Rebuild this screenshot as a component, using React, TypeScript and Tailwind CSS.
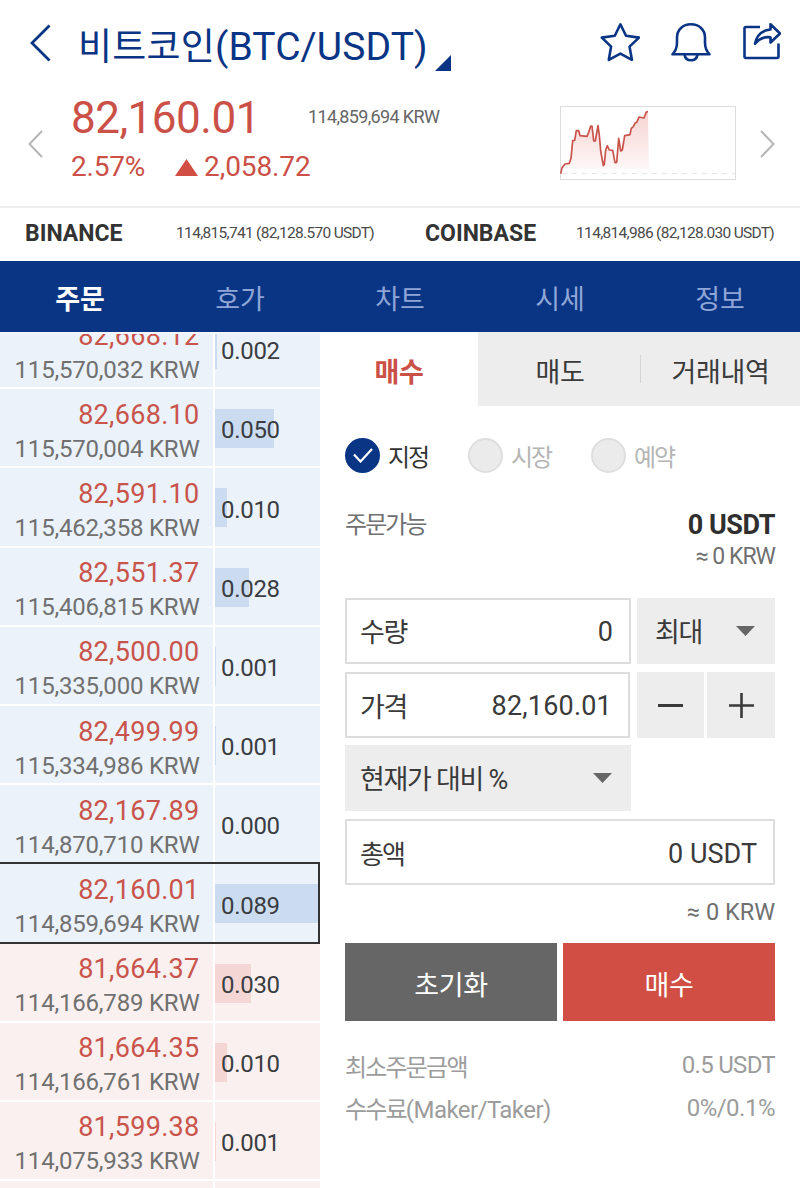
import { useState } from 'react';
import clsx from 'clsx';

type Side = 'ask' | 'bid';

interface Level {
  price: string;
  krw: string;
  qty: string;
  bar: number; // px width of the depth bar
  side: Side;
}

const LEVELS: Level[] = [
  { price: '82,668.12', krw: '115,570,032', qty: '0.002', bar: 2, side: 'ask' },
  { price: '82,668.10', krw: '115,570,004', qty: '0.050', bar: 59, side: 'ask' },
  { price: '82,591.10', krw: '115,462,358', qty: '0.010', bar: 12, side: 'ask' },
  { price: '82,551.37', krw: '115,406,815', qty: '0.028', bar: 34, side: 'ask' },
  { price: '82,500.00', krw: '115,335,000', qty: '0.001', bar: 1, side: 'ask' },
  { price: '82,499.99', krw: '115,334,986', qty: '0.001', bar: 1, side: 'ask' },
  { price: '82,167.89', krw: '114,870,710', qty: '0.000', bar: 0, side: 'ask' },
  { price: '82,160.01', krw: '114,859,694', qty: '0.089', bar: 105, side: 'ask' },
  { price: '81,664.37', krw: '114,166,789', qty: '0.030', bar: 36, side: 'bid' },
  { price: '81,664.35', krw: '114,166,761', qty: '0.010', bar: 12, side: 'bid' },
  { price: '81,599.38', krw: '114,075,933', qty: '0.001', bar: 1, side: 'bid' },
];

const CURRENT_PRICE = '82,160.01';
const TABS = ['주문', '호가', '차트', '시세', '정보'];
const ORDER_TYPES = ['지정', '시장', '예약'];

const SPARK =
  'M.7 67.7 2 61.7 5 58l4.3-.7 1.7-5 1.7-17.600 2-.4 1.600-9.600h2.400l1.300 5 7 .6 1.700-4 2-6.300H32L33.700 35h1.600L38 19.700l1.300 9.300 1.400 16 2.600 14.700 1-1.400L45.700 44l1.600-4.300 2 4.300 3.400.3L55 56.700l1.700-.4 2-24 2 12.700 1.600-1 2.400-14.300 5.300-1 1.300-6.400 2-1.600 1.700-3.400 1.700-1L79 11l5 1 2.300-6 1.700-.3';

function Header() {
  return (
    <header className="flex h-[90px] items-start text-[#0a3585]">
      <svg className="ml-[30px] mt-[24px] h-[38px] w-[21px] shrink-0" viewBox="0 0 21 38" fill="none" stroke="currentColor" strokeWidth="2.8">
        <path d="M19.5 1.5 2 19l17.5 17.5" />
      </svg>
      <h1 className="ml-[27px] mt-[19px] flex h-[56px] items-baseline whitespace-nowrap text-[39px] leading-[56px]">
        <span className="text-[37px] tracking-[0.2px]">비트코인</span>
        <span className="tracking-[0.1px]">(BTC/USDT)</span>
      </h1>
      <svg className="ml-[7px] mt-[55px] h-[16px] w-[16px] shrink-0" viewBox="0 0 16 16" fill="currentColor">
        <path d="M16 0v16H0z" />
      </svg>
      <div className="ml-auto mr-[19px] mt-[22px] flex gap-[31px]">
        <svg className="h-[40px] w-[40px]" viewBox="0 0 40 40" fill="none" stroke="currentColor" strokeWidth="2.6" strokeLinejoin="round">
          <path d="m20.4 2.3 5.6 11.5 13 1.8-9.5 9 2.4 13.2-11.500-6.200-11.600 6.200 2.300-13.200-9.300-9 13-1.800z" />
        </svg>
        <svg className="h-[40px] w-[40px]" viewBox="0 0 40 40" fill="none" stroke="currentColor" strokeWidth="2.6" strokeLinejoin="round">
          <path d="M1.5 32.300h37c-3.200-3.300-4.500-6.800-4.500-11.500v-5.300C34 7.600 28 2.300 20 2.300S6 7.600 6 15.500v5.300c0 4.700-1.300 8.200-4.500 11.500z" />
          <path d="M13.5 32.500c.5 3.500 3 5.800 6.500 5.800s6-2.300 6.500-5.800" />
        </svg>
        <svg className="h-[40px] w-[39px]" viewBox="0 0 39 40" fill="none" stroke="currentColor" strokeWidth="2.6" strokeLinejoin="round">
          <path d="M18 5H4Q2.500 5 2.500 6.500V34.500q0 1.500 1.500 1.500h31q1.500 0 1.500-1.500V21.500" />
          <path d="M28.500 2.300 38 11.500l-9.500 9v-5.300c-6.500-.6-11.500 1.300-15.500 6.600 1.600-8 7-13.500 15.500-14.300z" />
        </svg>
      </div>
    </header>
  );
}

function Sparkline() {
  return (
    <svg className="h-[74px] w-[176px]" viewBox="0 0 176 74" fill="none">
      <defs>
        <linearGradient id="spark" x1="0" y1="0" x2="0" y2="1">
          <stop offset="0" stopColor="#f6d3d0" />
          <stop offset="1" stopColor="#fefafa" />
        </linearGradient>
      </defs>
      <path d={`${SPARK}L89 63H.7z`} fill="url(#spark)" />
      <path d="M2 67.5h173" stroke="#e8e6e2" strokeDasharray="5 5" />
      <rect x="0.5" y="0.5" width="175" height="73" stroke="#ddd" />
      <path d={SPARK} stroke="#c9544b" strokeWidth="1.7" strokeLinejoin="round" />
    </svg>
  );
}

function PriceSummary() {
  return (
    <section className="flex h-[116px] items-start text-[#cb5047]">
      <svg className="ml-[28px] mt-[40px] h-[28px] w-[15px] shrink-0" viewBox="0 0 15 28" fill="none" stroke="#b5b5b5" strokeWidth="2">
        <path d="M14 1 1.5 14 14 27" />
      </svg>
      <div className="ml-[28px] mt-[2px] w-[237px] shrink-0">
        <div className="text-[44px] leading-[52px] tracking-[-0.5px]">82,160.01</div>
        <div className="mt-[6px] flex items-center whitespace-nowrap text-[28px] leading-[34px]">
          <span className="tracking-[-0.2px]">2.57%</span>
          <svg className="ml-[30px] h-[17px] w-[23px] shrink-0" viewBox="0 0 23 17" fill="#d04e44">
            <path d="M11.5 0 23 17H0z" />
          </svg>
          <span className="ml-[6px] tracking-[-0.1px]">2,058.72</span>
        </div>
      </div>
      <div className="mt-[15px] whitespace-nowrap text-[18px] leading-[24px] tracking-[-0.65px] text-[#666]">114,859,694 KRW</div>
      <div className="ml-auto mt-[16px]">
        <Sparkline />
      </div>
      <svg className="ml-[24px] mr-[25px] mt-[40px] h-[28px] w-[15px] shrink-0" viewBox="0 0 15 28" fill="none" stroke="#b5b5b5" strokeWidth="2">
        <path d="M1 1l12.5 13L1 27" />
      </svg>
    </section>
  );
}

function Exchange({ name, quote }: { name: string; quote: string }) {
  return (
    <div className="flex w-[400px] items-center justify-between pb-[1px] pl-[25px] pr-[26px]">
      <span className="text-[23px] font-bold text-[#333]">{name}</span>
      <span className="whitespace-nowrap text-[15.5px] tracking-[-0.7px] text-[#4a4a4a]">{quote}</span>
    </div>
  );
}

function LevelRow({ level }: { level: Level }) {
  const selected = level.price === CURRENT_PRICE;
  const bg = level.side === 'ask' ? 'bg-[#ebf2fa]' : 'bg-[#faf0ef]';
  return (
    <div className="relative flex h-[79.2px] shrink-0 gap-[2.5px] pb-[2px]">
      <div className={clsx('w-[212.5px] pr-[13px] pt-[8.5px] text-right leading-[34px]', bg)}>
        <div className="text-[27px] tracking-[0.3px] text-[#c9544c]">{level.price}</div>
        <div className="whitespace-nowrap text-[24px] tracking-[-0.2px] text-[#707070]">{level.krw} KRW</div>
      </div>
      <div className={clsx('relative flex flex-1 items-center pl-[6px] pt-[5px]', bg)}>
        <div
          className={clsx('absolute left-0 top-[20px] h-[39px]', level.side === 'ask' ? 'bg-[#cbdcf0]' : 'bg-[#f4d7d5]')}
          style={{ width: level.bar }}
        />
        <span className="relative text-[24px] tracking-[-0.3px] text-[#3a3d42]">{level.qty}</span>
      </div>
      {selected && <div className="absolute -top-[2px] bottom-0 left-0 right-0 border-2 border-l-0 border-[#333]" />}
    </div>
  );
}

function Caret() {
  return (
    <svg className="h-[10px] w-[19px] shrink-0" viewBox="0 0 19 10" fill="#666">
      <path d="M0 0h19l-9.5 10z" />
    </svg>
  );
}

function OrderForm() {
  const [type, setType] = useState('지정');
  return (
    <section className="flex w-[480px] flex-col text-[#3a3a3a]">
      <div className="flex h-[74px] shrink-0 text-[27px] tracking-[-0.3px]">
        <div className="flex w-[158px] items-center justify-center pt-[8px] font-bold text-[#cb5047]">매수</div>
        <div className="flex flex-1 items-center bg-[#ededed]">
          <div className="w-[162px] pl-[2px] pt-[8px] text-center">매도</div>
          <div className="h-[28px] w-px bg-[#d5d5d5]" />
          <div className="flex-1 pt-[8px] text-center">거래내역</div>
        </div>
      </div>

      <div className="flex flex-col pl-[25px] pr-[25px]">
        <div className="mt-[31px] flex h-[36px]">
          {ORDER_TYPES.map((t) => (
            <button key={t} onClick={() => setType(t)} className="flex w-[123px] items-center">
              {t === type ? (
                <span className="flex size-[35px] items-center justify-center rounded-full bg-[#0a3585]">
                  <svg className="h-[15px] w-[20px]" viewBox="0 0 20 15" fill="none" stroke="#fff" strokeWidth="2.2">
                    <path d="M1 6.5 7.5 13.5 19 1" />
                  </svg>
                </span>
              ) : (
                <span className="size-[35px] rounded-full border-2 border-[#dedede] bg-[#ebebeb]" />
              )}
              <span className={clsx('ml-[8px] mt-[6px] text-[24px] leading-[32px] tracking-[-2.2px]', t === type ? 'text-[#333]' : 'text-[#b5b5b5]')}>{t}</span>
            </button>
          ))}
        </div>

        <div className="mt-[36px] flex h-[89px] justify-between">
          <span className="text-[24px] leading-[32px] tracking-[-1.9px] text-[#707070]">주문가능</span>
          <div className="text-right">
            <div className="text-[27px] font-bold leading-[33px] tracking-[-0.45px] text-[#2f2f2f]">0 USDT</div>
            <div className="text-[23px] leading-[30px] tracking-[-1px] text-[#707070]">≈ 0 KRW</div>
          </div>
        </div>

        <div className="flex h-[66px] text-[27px]">
          <div className="flex w-[286px] items-center justify-between border-2 border-[#ddd] pl-[13px] pr-[16px]">
            <span className="pt-[5px] tracking-[-1.3px]">수량</span>
            <span className="pt-[3px]">0</span>
          </div>
          <button className="ml-[6px] flex flex-1 items-center justify-between bg-[#ededed] pl-[18px] pr-[20px]">
            <span className="pt-[5px] tracking-[-1.3px]">최대</span>
            <Caret />
          </button>
        </div>

        <div className="mt-[8px] flex h-[66px] text-[27px]">
          <div className="flex w-[285px] items-center justify-between border-2 border-[#ddd] pl-[13px] pr-[16px]">
            <span className="pt-[6px] tracking-[-1.3px]">가격</span>
            <span className="pt-[3px] tracking-[0.2px]">82,160.01</span>
          </div>
          <button className="ml-[7px] flex w-[67px] items-center justify-center bg-[#ededed]" aria-label="minus">
            <span className="h-[3px] w-[25px] bg-[#3a3a3a]" />
          </button>
          <button className="ml-[3px] flex flex-1 items-center justify-center bg-[#ededed]" aria-label="plus">
            <svg className="size-[25px]" viewBox="0 0 25 25" stroke="#3a3a3a" strokeWidth="2.6">
              <path d="M0 12.5h25M12.5 0v25" />
            </svg>
          </button>
        </div>

        <button className="mt-[7px] flex h-[66px] w-[286px] items-center justify-between bg-[#ededed] pl-[15px] pr-[19px] text-[27px]">
          <span className="mt-[5px] tracking-[-1.3px]">현재가 대비 %</span>
          <Caret />
        </button>

        <div className="mt-[8px] flex h-[66px] items-center justify-between border-2 border-[#ddd] pl-[13px] pr-[16px] text-[27px]">
          <span className="pt-[6px] text-[26px] tracking-[-2px]">총액</span>
          <span className="pt-[4px]">0 USDT</span>
        </div>

        <div className="mt-[11px] h-[32px] text-right text-[23.5px] leading-[32px] text-[#707070]">≈ 0 KRW</div>

        <div className="mt-[15px] flex h-[78px] gap-[6px] text-[27px] text-white">
          <button className="flex-1 bg-[#666] pt-[8px] tracking-[-0.3px]">초기화</button>
          <button className="flex-1 bg-[#d04e44] pt-[8px] tracking-[-0.3px]">매수</button>
        </div>

        <div className="mt-[23px] flex h-[43px] justify-between text-[24px] leading-[40px] text-[#9c9c9c]">
          <span className="mt-[4px] tracking-[-1.8px]">최소주문금액</span>
          <span className="mt-[1px] tracking-[-0.7px]">0.5 USDT</span>
        </div>
        <div className="flex h-[43px] justify-between text-[24px] leading-[40px] text-[#9c9c9c]">
          <span className="mt-[3px]">
            <span className="tracking-[-1.8px]">수수료</span>
            <span className="tracking-[-0.55px]">(Maker/Taker)</span>
          </span>
          <span className="mt-px tracking-[-0.5px]">0%/0.1%</span>
        </div>
      </div>
    </section>
  );
}

export default function App() {
  const [tab, setTab] = useState('주문');
  return (
    <div className="flex h-[1188px] w-[800px] flex-col overflow-hidden bg-white font-['Roboto','Noto_Sans_CJK_KR',sans-serif]">
      <Header />
      <PriceSummary />
      <div className="flex h-[55px] border-t-2 border-[#eee]">
        <Exchange name="BINANCE" quote="114,815,741 (82,128.570 USDT)" />
        <Exchange name="COINBASE" quote="114,814,986 (82,128.030 USDT)" />
      </div>
      <nav className="flex h-[71px] bg-[#0a3585] pt-[8px] text-[27px]">
        {TABS.map((t) => (
          <button
            key={t}
            onClick={() => setTab(t)}
            className={clsx('w-[160px]', t === tab ? 'font-bold text-white' : 'text-[#8fa6d6]')}
          >
            {t}
          </button>
        ))}
      </nav>
      <main className="flex min-h-0 flex-1">
        <div className="w-[320px] overflow-hidden border-t-2 border-[#f3f6fa]">
          <div className="-mt-[23.9px] flex flex-col">
            {LEVELS.map((level) => (
              <LevelRow key={level.price} level={level} />
            ))}
            {/* next level, peeking in at the bottom */}
            <div className="flex h-[8px] gap-[2.5px]">
              <div className="w-[212.5px] bg-[#faf0ef]" />
              <div className="flex-1 bg-[#faf0ef]" />
            </div>
          </div>
        </div>
        <OrderForm />
      </main>
    </div>
  );
}
